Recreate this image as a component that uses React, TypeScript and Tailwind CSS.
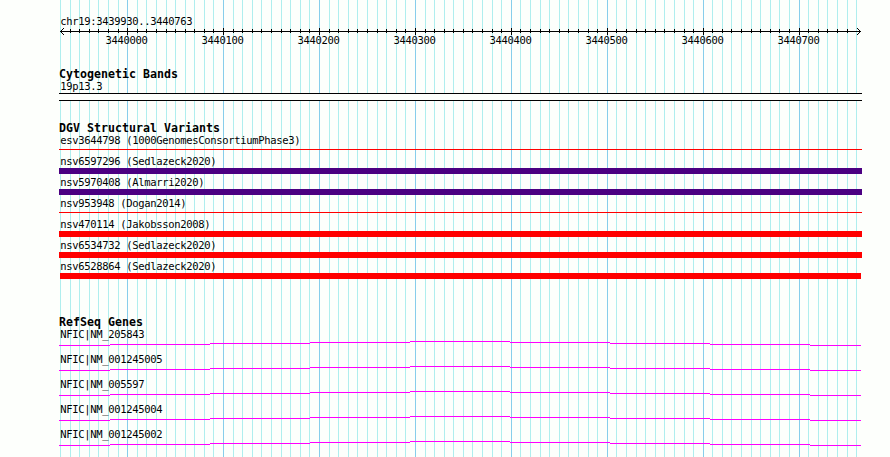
const START = 3439930;
const STOP = 3440763;
const LEFT = 60;
const PLOT_WIDTH = 800;

const toX = (pos: number) => Math.round(LEFT + ((pos - START) * PLOT_WIDTH) / (STOP - START + 1));

const ticks: { pos: number; x: number; major: boolean }[] = [];
for (let pos = START; pos <= STOP; pos += 10) {
  ticks.push({ pos, x: toX(pos), major: pos % 100 === 0 });
}

interface Variant {
  label: string;
  bar: string;
}

const variants: Variant[] = [
  { label: "esv3644798 (1000GenomesConsortiumPhase3)", bar: "mt-[3px] ml-[59px] h-px w-[803px] bg-[#ff0000]" },
  { label: "nsv6597296 (Sedlazeck2020)", bar: "mt-px ml-[59px] h-1.5 w-[803px] bg-[#4b0082]" },
  { label: "nsv5970408 (Almarri2020)", bar: "mt-px ml-[59px] h-1.5 w-[803px] bg-[#4b0082]" },
  { label: "nsv953948 (Dogan2014)", bar: "mt-[3px] ml-[59px] h-px w-[803px] bg-[#ff0000]" },
  { label: "nsv470114 (Jakobsson2008)", bar: "mt-px ml-[59px] h-1.5 w-[803px] bg-[#ff0000]" },
  { label: "nsv6534732 (Sedlazeck2020)", bar: "mt-px ml-[59px] h-1.5 w-[803px] bg-[#ff0000]" },
  { label: "nsv6528864 (Sedlazeck2020)", bar: "mt-px ml-[60px] h-1.5 w-[801px] bg-[#ff0000]" },
];

const genes = [
  "NFIC|NM_205843",
  "NFIC|NM_001245005",
  "NFIC|NM_005597",
  "NFIC|NM_001245004",
  "NFIC|NM_001245002",
];

// the intron line rises one pixel per step up to the middle, then falls again
const intronSteps = [
  { x: 0, end: 51, y: 4 },
  { x: 51, end: 151, y: 3 },
  { x: 151, end: 251, y: 2 },
  { x: 251, end: 351, y: 1 },
  { x: 351, end: 451, y: 0 },
  { x: 451, end: 551, y: 1 },
  { x: 551, end: 651, y: 2 },
  { x: 651, end: 751, y: 3 },
  { x: 751, end: 802, y: 4 },
];

const Grid = () => (
  <svg className="absolute inset-0 -z-10" width={890} height={457} shapeRendering="crispEdges">
    {ticks.map((t) => (
      <rect key={t.pos} x={t.x} y={0} width={1} height={457} fill={t.major ? "#87ceeb" : "#afeeee"} />
    ))}
  </svg>
);

const Ruler = () => (
  <svg className="block h-[22px] w-full" width={890} height={22} shapeRendering="crispEdges">
    <rect x={60} y={4} width={801} height={1} />
    {/* the arrow heads take the place of the outermost ticks */}
    {ticks.slice(1, -1).map((t) => (
      <rect key={t.pos} x={t.x} y={t.major ? 1 : 2} width={1} height={t.major ? 7 : 4} />
    ))}
    <path d="M61 3h1v1h-1zM62 2h1v1h-1zM63 1h1v1h-1zM61 5h1v1h-1zM62 6h1v1h-1zM63 7h1v1h-1z" />
    <path d="M859 3h1v1h-1zM858 2h1v1h-1zM857 1h1v1h-1zM859 5h1v1h-1zM858 6h1v1h-1zM857 7h1v1h-1z" />
    {ticks
      .filter((t) => t.major)
      .map((t) => (
        <text key={t.pos} x={t.x - 21.5} y={17}>
          {t.pos}
        </text>
      ))}
  </svg>
);

const TrackTitle = ({ children }: { children: string }) => (
  <h2 className="h-3 pl-[59px] text-[11.6px] leading-3 font-bold tracking-[0.017px]">{children}</h2>
);

const Label = ({ children }: { children: string }) => (
  <div className="h-3 pl-[60.3px] leading-3">{children}</div>
);

const App = () => {
  return (
    <main className="relative isolate h-[457px] w-[890px] overflow-hidden bg-[#fdfffc] pt-[15px] font-['DejaVu_Sans_Mono',monospace] text-[10.5px] tracking-[-0.321px] whitespace-pre text-black">
      <Grid />
      <Label>chr19:3439930..3440763</Label>
      <Ruler />

      <section className="mt-[19px]">
        <TrackTitle>Cytogenetic Bands</TrackTitle>
        <Label>19p13.3</Label>
        <div className="mt-px ml-[59px] h-2 w-[803px] border-y border-black bg-[#fdfffc]" />
      </section>

      <section className="mt-[21px]">
        <TrackTitle>DGV Structural Variants</TrackTitle>
        {variants.map((v) => (
          <div key={v.label} className="flex h-[21px] flex-col">
            <Label>{v.label}</Label>
            <div className={v.bar} />
          </div>
        ))}
      </section>

      <section className="mt-[35px]">
        <TrackTitle>RefSeq Genes</TrackTitle>
        {genes.map((gene) => (
          <div key={gene} className="h-[25px]">
            <Label>{gene}</Label>
            <svg className="mt-px ml-[59px] block" width={802} height={5} shapeRendering="crispEdges" fill="#ff00ff">
              {intronSteps.map((s) => (
                <rect key={s.x} x={s.x} y={s.y} width={s.end - s.x} height={1} />
              ))}
            </svg>
          </div>
        ))}
      </section>
    </main>
  );
};

export default App;
